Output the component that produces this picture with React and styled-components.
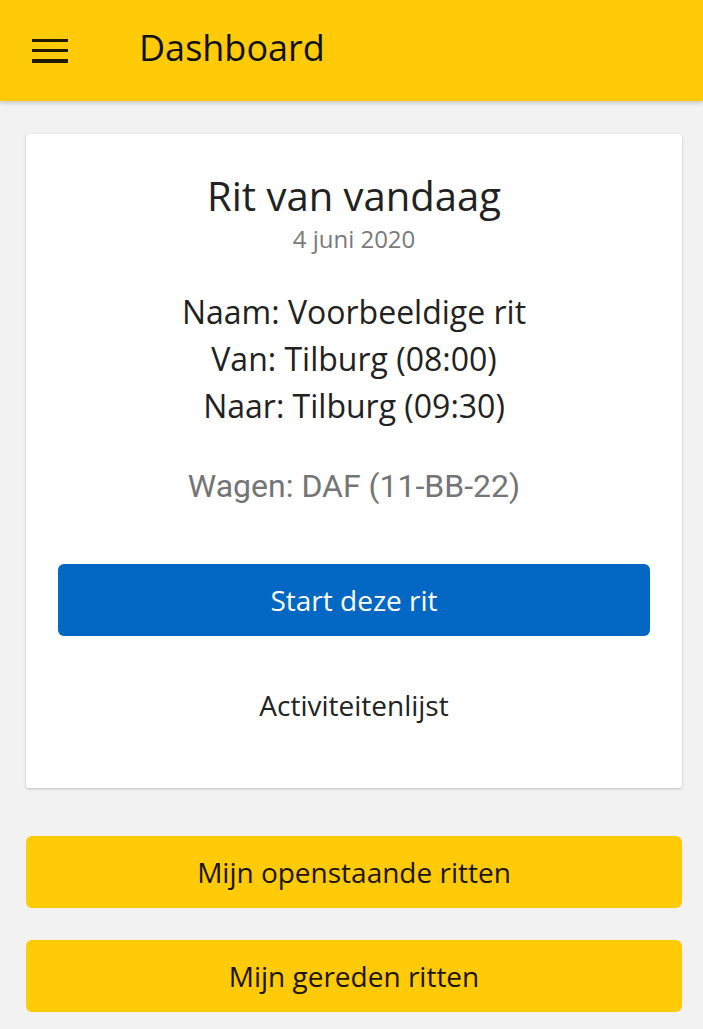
import React from 'react'
import styled, { createGlobalStyle } from 'styled-components'

const GlobalStyle = createGlobalStyle`
    html, body {
        margin: 0;
        padding: 0;
        background: #f2f2f2;
        font-family: "Open Sans", "Noto Sans", sans-serif;
    }
`

const Page = styled.div`
    min-height: 1029px;
    background: #f2f2f2;
`

const TopBar = styled.header`
    height: 101px;
    background: #ffca08;
    display: flex;
    align-items: center;
    box-shadow: 0 2px 4px rgba(0, 0, 0, 0.18);
`

const MenuButton = styled.button`
    width: 36px;
    height: 24px;
    margin-left: 32px;
    padding: 0;
    border: none;
    background: none;
    display: flex;
    flex-direction: column;
    justify-content: space-between;
    cursor: pointer;
`

const MenuBar = styled.span`
    display: block;
    height: 3.5px;
    background: #221a00;
`

const Title = styled.h1`
    margin: 0 0 0 71px;
    font-size: 36px;
    font-weight: 400;
    color: #111;
    line-height: 1;
    padding-bottom: 6px;
`

const Content = styled.main`
    padding: 33px 21px 0 26px;
    display: flex;
    flex-direction: column;
`

const Card = styled.section`
    background: #fff;
    border-radius: 3px;
    box-shadow: 0 1px 3px rgba(0, 0, 0, 0.22);
    padding: 38px 32px 63px;
    display: flex;
    flex-direction: column;
    align-items: center;
    text-align: center;
    color: #222;
`

const CardTitle = styled.h2`
    margin: 0;
    font-size: 40px;
    font-weight: 400;
    line-height: 48px;
`

const DateText = styled.div`
    margin-top: 4px;
    font-size: 24px;
    color: #7a7a7a;
    line-height: 30px;
`

const Details = styled.div`
    margin-top: 34px;
    font-size: 32px;
    line-height: 47px;
`

const Vehicle = styled.div`
    margin-top: 37px;
    font-family: Roboto, sans-serif;
    font-size: 32px;
    color: #757575;
    line-height: 40px;
`

const Button = styled.button`
    width: 100%;
    height: 72px;
    padding: 0;
    border: none;
    border-radius: 6px;
    background: ${props => props.bg};
    color: ${props => props.fg};
    font-family: "Open Sans", sans-serif;
    font-size: 28px;
    cursor: pointer;
`

const LinkButton = styled.button`
    margin-top: 49px;
    padding: 0;
    border: none;
    background: none;
    color: #222;
    font-family: "Open Sans", sans-serif;
    font-size: 28px;
    line-height: 40px;
    cursor: pointer;
`

const PrimaryWrap = styled.div`
    width: 100%;
    margin-top: 58px;
`

const ActionList = styled.div`
    margin-top: 48px;
    display: flex;
    flex-direction: column;
    gap: 32px;
`

export default function App() {
    return (
        <Page>
            <GlobalStyle />
            <TopBar>
                <MenuButton aria-label="menu">
                    <MenuBar />
                    <MenuBar />
                    <MenuBar />
                </MenuButton>
                <Title>Dashboard</Title>
            </TopBar>
            <Content>
                <Card>
                    <CardTitle>Rit van vandaag</CardTitle>
                    <DateText>4 juni 2020</DateText>
                    <Details>
                        <div>Naam: Voorbeeldige rit</div>
                        <div>Van: Tilburg (08:00)</div>
                        <div>Naar: Tilburg (09:30)</div>
                    </Details>
                    <Vehicle>Wagen: DAF (11-BB-22)</Vehicle>
                    <PrimaryWrap>
                        <Button bg="#0368c4" fg="#fff">Start deze rit</Button>
                    </PrimaryWrap>
                    <LinkButton>Activiteitenlijst</LinkButton>
                </Card>
                <ActionList>
                    <Button bg="#ffca08" fg="#1a1400">Mijn openstaande ritten</Button>
                    <Button bg="#ffca08" fg="#1a1400">Mijn gereden ritten</Button>
                </ActionList>
            </Content>
        </Page>
    )
}
